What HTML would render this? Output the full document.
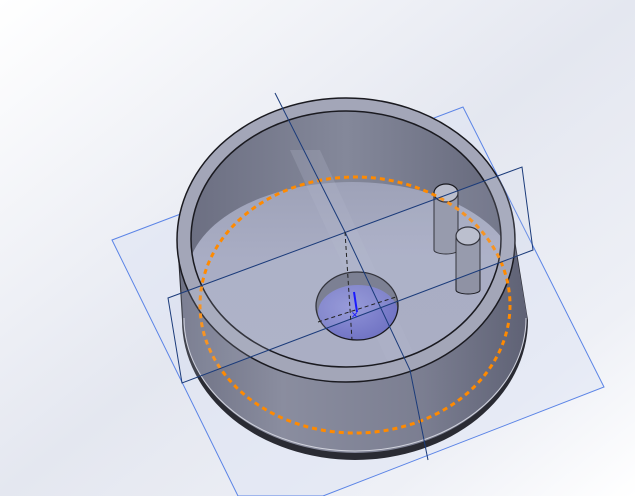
<!DOCTYPE html>
<html><head><style>html,body{margin:0;padding:0;width:635px;height:496px;overflow:hidden}</style></head>
<body>
<svg width="635" height="496" viewBox="0 0 635 496" xmlns="http://www.w3.org/2000/svg">
<defs>
<linearGradient id="bg" x1="0" y1="0" x2="1" y2="1">
<stop offset="0" stop-color="#ffffff"/><stop offset="0.5" stop-color="#e4e7f0"/><stop offset="0.8" stop-color="#eef0f6"/><stop offset="1" stop-color="#ffffff"/>
</linearGradient>
<linearGradient id="body" x1="0" y1="0" x2="1" y2="0">
<stop offset="0" stop-color="#6e7184"/><stop offset="0.3" stop-color="#8a8d9f"/><stop offset="0.7" stop-color="#7b7e91"/><stop offset="1" stop-color="#5f6275"/>
</linearGradient>
<linearGradient id="wall" x1="0" y1="0" x2="1" y2="0">
<stop offset="0" stop-color="#6c6f82"/><stop offset="0.5" stop-color="#84889a"/><stop offset="1" stop-color="#66697c"/>
</linearGradient>
<linearGradient id="floor" x1="0" y1="0" x2="0" y2="1">
<stop offset="0" stop-color="#9ea2b8"/><stop offset="0.4" stop-color="#a9adc4"/><stop offset="1" stop-color="#aaaec4"/>
</linearGradient>
<radialGradient id="hole" cx="0.4" cy="0.4" r="0.7">
<stop offset="0" stop-color="#8f92d8"/><stop offset="1" stop-color="#6c6fc0"/>
</radialGradient>
<clipPath id="inner"><ellipse cx="346" cy="239" rx="155" ry="128"/></clipPath>
<clipPath id="holec"><ellipse cx="357" cy="306" rx="41" ry="34"/></clipPath>
</defs>
<rect width="635" height="496" fill="url(#bg)"/>
<polygon points="112,240 463,107 604,387 323,496 238,496" fill="#dde3f3" fill-opacity="0.5" stroke="#5b84e6" stroke-width="1"/>
<path d="M177,240 L182,320 A173,140 0 0 0 528,320 L515,240 Z" fill="#2a2b33"/>
<path d="M178,240 L183,316 A172,137 0 0 0 527,316 L514,240 Z" fill="url(#body)"/>
<path d="M184,318 A171,133 0 0 0 526,318" fill="none" stroke="#d0d2dc" stroke-width="1"/>
<ellipse cx="346" cy="240" rx="169" ry="142" fill="#a3a6b8" stroke="#1a1a20" stroke-width="1.5"/>
<ellipse cx="346" cy="239" rx="155" ry="128" fill="url(#wall)"/>
<g clip-path="url(#inner)">
<ellipse cx="352" cy="278" rx="165" ry="96" fill="url(#floor)"/>
<polygon points="290,150 320,150 420,367 390,367" fill="#b3b6ca" opacity="0.25"/>
</g>
<ellipse cx="346" cy="239" rx="155" ry="128" fill="none" stroke="#1a1a20" stroke-width="1.5"/>
<g clip-path="url(#inner)">
<path d="M434,193 L434,250 A12,4 0 0 0 458,250 L458,193Z" fill="#8f92a4" stroke="#1a1a20" stroke-width="1"/>
<path d="M456,236 L456,290 A12,4 0 0 0 480,290 L480,236Z" fill="#8f92a4" stroke="#1a1a20" stroke-width="1"/>
</g>
<ellipse cx="446" cy="193" rx="12" ry="9" fill="#b9bccb" stroke="#1a1a20" stroke-width="1.2"/>
<ellipse cx="468" cy="236" rx="12" ry="9" fill="#b9bccb" stroke="#1a1a20" stroke-width="1.2"/>
<ellipse cx="357" cy="306" rx="41" ry="34" fill="#6f7285"/>
<ellipse cx="358" cy="313" rx="40" ry="28" fill="url(#hole)" clip-path="url(#holec)"/>
<ellipse cx="357" cy="306" rx="41" ry="34" fill="none" stroke="#1a1a20" stroke-width="1.3"/>
<ellipse cx="355" cy="305" rx="155" ry="128" fill="none" stroke="#ff8a00" stroke-width="3" stroke-dasharray="5 4"/>
<polygon points="168,298 522,167 533,250 182,383" fill="#c9d0e6" fill-opacity="0.15" stroke="#1b3b7a" stroke-width="1"/>
<polyline points="275,93 345,232 410,370 428,460" fill="none" stroke="#1b3b7a" stroke-width="1"/>
<line x1="345" y1="232" x2="352" y2="340" stroke="#222" stroke-width="1" stroke-dasharray="4 3"/>
<line x1="318" y1="322" x2="396" y2="297" stroke="#222" stroke-width="1" stroke-dasharray="4 3"/>
<line x1="354" y1="292" x2="357" y2="312" stroke="#1a1aff" stroke-width="2"/>
<text x="351" y="318" font-family="Liberation Sans, sans-serif" font-size="9" fill="#1a1aff">✕</text>
</svg>
</body></html>
